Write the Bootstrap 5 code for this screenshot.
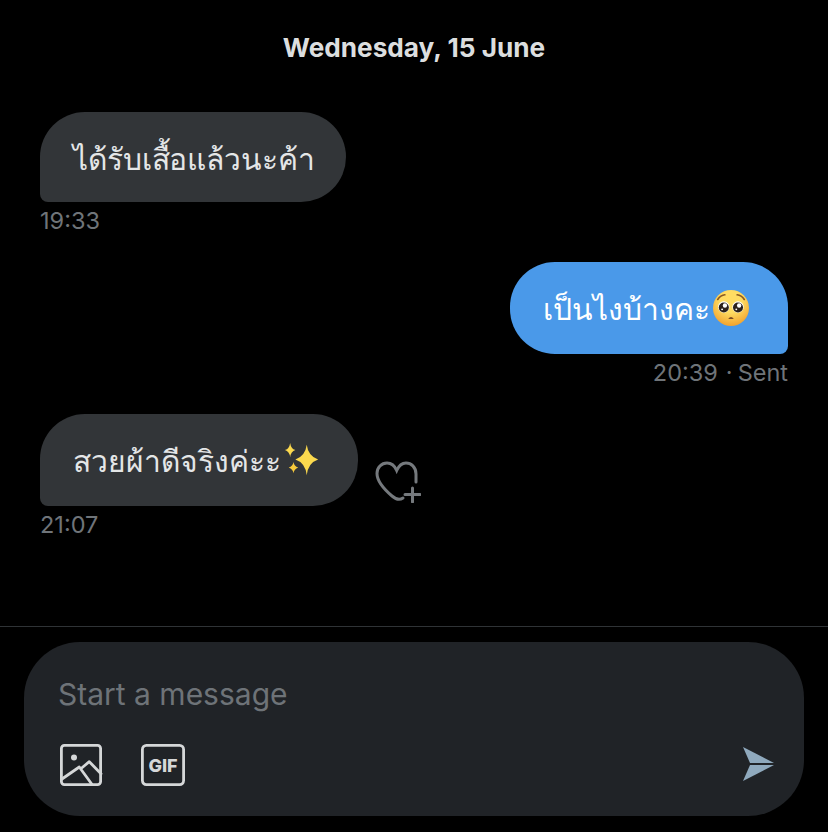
<!DOCTYPE html>
<html lang="en">
  <head>
    <meta charset="UTF-8" />
    <meta name="viewport" content="width=device-width, initial-scale=1.0" />
    <title>Messages</title>
    <link href="https://cdn.jsdelivr.net/npm/bootstrap@5.3.3/dist/css/bootstrap.min.css" rel="stylesheet" />
    <style>
      body {
        background-color: #000;
        height: 832px;
        overflow: hidden;
        font-family: Inter, "Noto Sans", "DejaVu Sans", sans-serif;
      }

      .date-line {
        padding-top: 32px;
        height: 112px;
        font-size: 26.2px;
        line-height: 32px;
        font-weight: 700;
        color: #dcdedf;
      }

      .msg-area {
        height: 514px;
        padding: 0 40px;
      }

      .bubble {
        height: 92px;
        padding: 3px 38px 0 33px;
        border-radius: 45px;
        font-size: 30px;
        color: #e4e6e7;
        background-color: #323538;
      }

      .bubble-first {
        height: 90px;
        padding: 4px 31px 0 33px;
        letter-spacing: -0.1px;
      }

      .bubble-in {
        border-bottom-left-radius: 8px;
      }

      .bubble-out {
        padding-right: 39px;
        background-color: #4a99e9;
        color: #fff;
        border-bottom-right-radius: 8px;
      }

      .bubble svg {
        margin-left: 3px;
        margin-bottom: 4px;
      }

      .msg-time {
        height: 60px;
        padding-top: 6px;
        font-size: 23.5px;
        line-height: 26px;
        color: #6f7479;
      }

      .sent-dot {
        margin: 0 5px 0 8px;
      }

      .heart-btn {
        margin-left: 17px;
        margin-bottom: 3px;
      }

      .composer-wrap {
        border-top: 1px solid #2f3336;
        padding: 15px 24px 16px;
      }

      .composer {
        height: 174px;
        border-radius: 56px;
        background-color: #202327;
        padding: 34px 30px 30px 34px;
      }

      .composer-text {
        font-size: 30px;
        line-height: 36px;
        color: #6e7378;
      }

      .tool-row {
        margin-top: 31px;
        gap: 35px;
      }

      .send-icon {
        margin-bottom: 2px;
      }
    </style>
  </head>
  <body>
    <div class="date-line text-center">Wednesday, 15 June</div>

    <div class="msg-area">
      <div class="d-flex">
        <div class="bubble bubble-first bubble-in d-flex align-items-center">ได้รับเสื้อแล้วนะค้า</div>
      </div>
      <div class="msg-time">19:33</div>

      <div class="d-flex justify-content-end">
        <div class="bubble bubble-out d-flex align-items-center">เป็นไงบ้างคะ
          <svg width="36" height="36" viewBox="0 0 38 38">
            <defs>
              <radialGradient id="faceFill" cx="50%" cy="32%" r="68%">
                <stop offset="0.45" stop-color="#ffdc62" />
                <stop offset="1" stop-color="#f2a22e" />
              </radialGradient>
            </defs>
            <circle cx="19" cy="19" r="19" fill="url(#faceFill)" />
            <circle cx="11.400" cy="18" r="6" fill="#fff" />
            <circle cx="26.400" cy="18" r="6" fill="#fff" />
            <circle cx="11.400" cy="18.400" r="5.300" fill="#2c211c" />
            <circle cx="26.400" cy="18.400" r="5.300" fill="#2c211c" />
            <circle cx="12.600" cy="16.400" r="2.300" fill="#fff" />
            <circle cx="27.600" cy="16.400" r="2.300" fill="#fff" />
            <circle cx="9.600" cy="20.400" r="1" fill="#fff" />
            <circle cx="24.600" cy="20.400" r="1" fill="#fff" />
            <path d="M5 10 Q8 5.500 12.500 5 M33 10 Q30 5.500 25.500 5" fill="none" stroke="#8a5a22" stroke-width="1.800" stroke-linecap="round" />
            <path d="M16 30.500 Q19 26.500 22 30.500 Z" fill="#7a4a22" />
          </svg>
        </div>
      </div>
      <div class="msg-time text-end">20:39<span class="sent-dot">·</span>Sent</div>

      <div class="d-flex align-items-end">
        <div class="bubble bubble-in d-flex align-items-center">สวยผ้าดีจริงค่ะะ
          <svg width="36" height="36" viewBox="0 0 38 38">
            <path d="M24 3 Q25.500 15 36 18.500 Q25.500 22 24 35 Q22.500 22 12 18.500 Q22.500 15 24 3 Z" fill="#fbd94e" />
            <path d="M6.500 1 Q7.300 7 12 8.500 Q7.300 10 6.500 16 Q5.700 10 1 8.500 Q5.700 7 6.500 1 Z" fill="#fbd94e" />
            <path d="M10 21 Q10.700 25.500 15 27 Q10.700 28.500 10 33 Q9.300 28.500 5 27 Q9.300 25.500 10 21 Z" fill="#f6c93c" />
          </svg>
        </div>
        <div class="heart-btn">
          <svg width="46" height="42" viewBox="0 0 46 42" fill="none" stroke="#75797d" stroke-width="3" stroke-linecap="round">
            <path d="M41 21 V13 C41 6 36 2 31 2 C26.500 2 23.500 5.500 21.700 9.500 C20 5.500 16.500 2 12 2 C6.500 2 2 6.500 2 12.500 C2 21 10 29 17 35 C21 38.500 25 39 28 37" />
            <path d="M37.500 27 V41 M30 33.500 H45" />
          </svg>
        </div>
      </div>
      <div class="msg-time">21:07</div>
    </div>

    <div class="composer-wrap">
      <div class="composer d-flex flex-column">
        <div class="composer-text">Start a message</div>
        <div class="tool-row d-flex align-items-center">
          <svg width="46" height="44" viewBox="0 0 46 44" fill="none" stroke="#d5d7d8" stroke-width="2.800" stroke-linejoin="round" stroke-linecap="round">
            <rect x="3.400" y="2.400" width="39.200" height="39.200" rx="3" />
            <circle cx="16" cy="14.500" r="3" fill="#d5d7d8" stroke="none" />
            <path d="M4 36 L21.300 24 L33.700 41 M23.700 25 L31.300 18.700 L43 30.700" />
          </svg>
          <svg width="48" height="44" viewBox="0 0 48 44">
            <rect x="3.400" y="2.400" width="41.200" height="39.200" rx="4" fill="none" stroke="#d5d7d8" stroke-width="2.800" />
            <text x="24" y="28.500" text-anchor="middle" font-family="Inter, sans-serif" font-weight="800" font-size="18" fill="#d5d7d8">GIF</text>
          </svg>
          <svg class="send-icon ms-auto" width="32" height="36" viewBox="0 0 32 36">
            <path d="M1 1 L32 17 H8 Z" fill="#8fa9bd" />
            <path d="M1 35 L32 19 H8 Z" fill="#8fa9bd" />
          </svg>
        </div>
      </div>
    </div>

    <script src="https://cdn.jsdelivr.net/npm/bootstrap@5.3.3/dist/js/bootstrap.bundle.min.js"></script>
  </body>
</html>
